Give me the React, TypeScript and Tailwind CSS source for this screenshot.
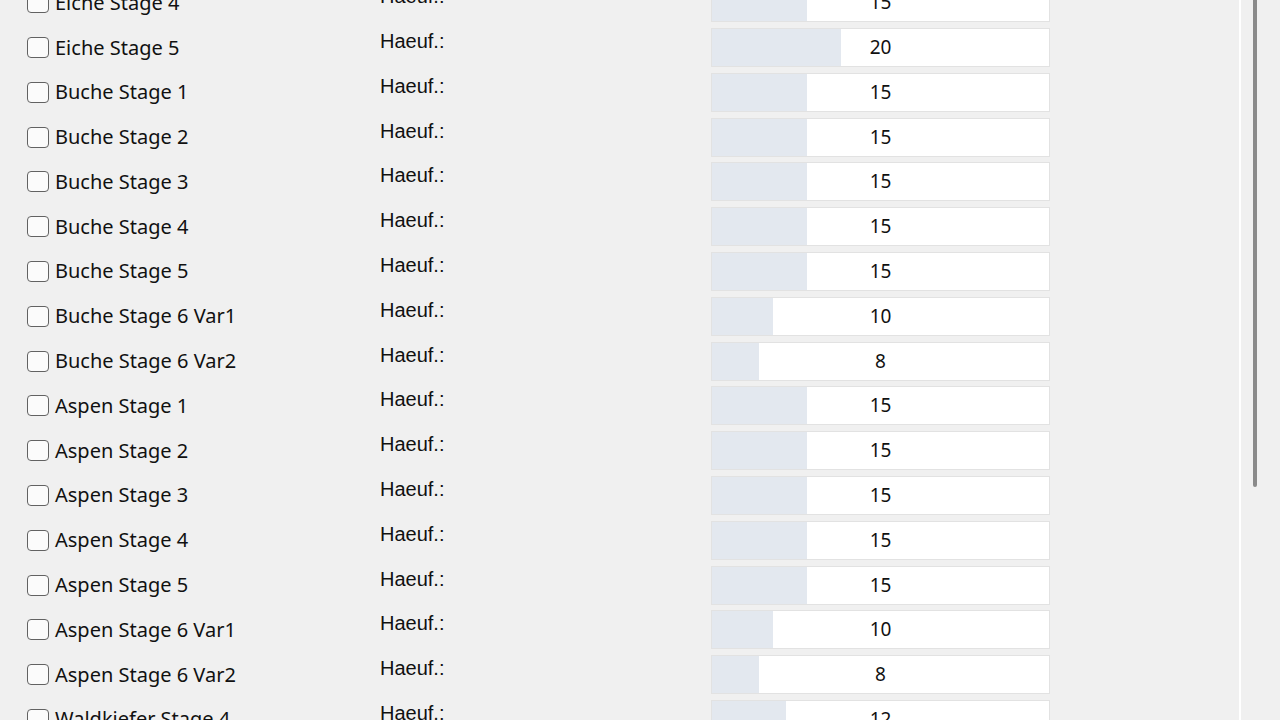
import React from "react";

const rows: { name: string; value: number }[] = [
  { name: "Eiche Stage 4", value: 15 },
  { name: "Eiche Stage 5", value: 20 },
  { name: "Buche Stage 1", value: 15 },
  { name: "Buche Stage 2", value: 15 },
  { name: "Buche Stage 3", value: 15 },
  { name: "Buche Stage 4", value: 15 },
  { name: "Buche Stage 5", value: 15 },
  { name: "Buche Stage 6 Var1", value: 10 },
  { name: "Buche Stage 6 Var2", value: 8 },
  { name: "Aspen Stage 1", value: 15 },
  { name: "Aspen Stage 2", value: 15 },
  { name: "Aspen Stage 3", value: 15 },
  { name: "Aspen Stage 4", value: 15 },
  { name: "Aspen Stage 5", value: 15 },
  { name: "Aspen Stage 6 Var1", value: 10 },
  { name: "Aspen Stage 6 Var2", value: 8 },
  { name: "Waldkiefer Stage 4", value: 12 },
];

function fillWidth(v: number) {
  return Math.round(6.83 * (v - 1.13));
}

export default function App() {
  return (
    <div className="flex h-[720px] w-[1280px] overflow-hidden bg-[#f0f0f0] text-black">
      <div className="w-[1239px] overflow-hidden">
        <div className="mt-[-19.7px] flex flex-col">
          {rows.map((r) => (
            <div key={r.name} className="flex h-[44.8px] shrink-0 items-center">
              <div className="ml-[27px] h-[21px] w-[22px] shrink-0 rounded-[4px] border-[1.5px] border-[#626262] bg-[#fbfbfb]" />
              <div
                className="ml-[6px] w-[325px] shrink-0 text-[20px] leading-none text-[#111]"
                style={{ fontFamily: '"Segoe UI", "Noto Sans", sans-serif' }}
              >
                {r.name}
              </div>
              <div
                className="mb-[13px] w-[331px] shrink-0 text-[20px] leading-none text-[#111]"
                style={{ fontFamily: '"Liberation Sans", Arial, sans-serif' }}
              >
                Haeuf.:
              </div>
              <div className="relative flex h-[39px] w-[339px] shrink-0 items-center justify-center border border-[#e2e2e2] bg-white">
                <div
                  className="absolute bottom-0 left-0 top-0 bg-[#e3e8ef]"
                  style={{ width: fillWidth(r.value) }}
                />
                <span
                  className="relative text-[19px] leading-none text-[#111]"
                  style={{ fontFamily: '"Segoe UI", "Noto Sans", sans-serif' }}
                >
                  {r.value}
                </span>
              </div>
            </div>
          ))}
        </div>
      </div>
      <div className="h-full w-[2px] bg-white" />
      <div className="flex h-full w-[39px] pl-[12px]">
        <div className="h-[487px] w-[4px] rounded-b-full bg-[#8a8a8a]" />
      </div>
    </div>
  );
}
